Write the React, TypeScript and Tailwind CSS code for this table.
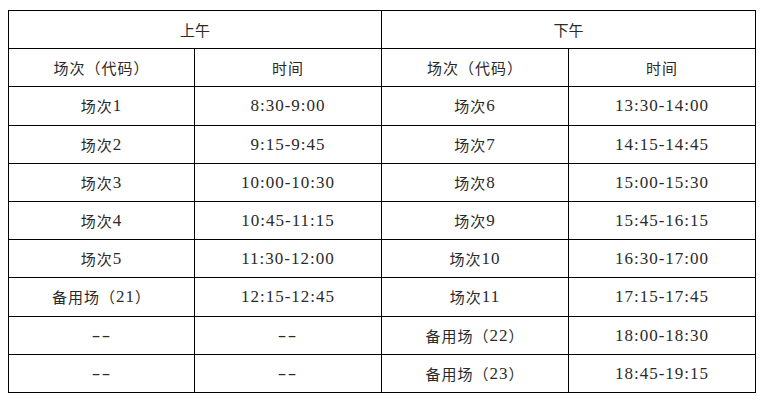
import type { ReactNode } from "react";

const am = [
  ["场次1", "8:30-9:00"],
  ["场次2", "9:15-9:45"],
  ["场次3", "10:00-10:30"],
  ["场次4", "10:45-11:15"],
  ["场次5", "11:30-12:00"],
  ["备用场（21）", "12:15-12:45"],
  ["--", "--"],
  ["--", "--"],
];
const pm = [
  ["场次6", "13:30-14:00"],
  ["场次7", "14:15-14:45"],
  ["场次8", "15:00-15:30"],
  ["场次9", "15:45-16:15"],
  ["场次10", "16:30-17:00"],
  ["场次11", "17:15-17:45"],
  ["备用场（22）", "18:00-18:30"],
  ["备用场（23）", "18:45-19:15"],
];

// ascii runs get a serif face, a bit larger, like the half-width glyphs of the original
function Txt({ s }: { s: string }) {
  if (s === "--") {
    return (
      <span
        className="inline-block text-[17px] tracking-[1px] scale-x-150"
        style={{ fontFamily: '"Liberation Serif", serif' }}
      >
        --
      </span>
    );
  }
  const parts = s.match(/[\x20-\x7e]+|[^\x20-\x7e]+/g) || [];
  const out: ReactNode[] = parts.map((p, i) =>
    /^[\x20-\x7e]+$/.test(p) ? (
      <span
        key={i}
        className="text-[17px] tracking-[1px]"
        style={{ fontFamily: '"Liberation Serif", serif' }}
      >
        {p}
      </span>
    ) : (
      <span key={i} className="tracking-[1px]">{p}</span>
    )
  );
  return <>{out}</>;
}

export default function App() {
  const cell =
    "h-[38.2px] flex items-center justify-center border-r border-b border-black leading-none";

  return (
    <main
      className="w-[764px] h-[401px] bg-white pt-[10px] pl-[8px] text-[15px] text-[#2a2a2a]"
      style={{ fontFamily: '"Noto Sans CJK SC", sans-serif' }}
    >
      <div className="grid grid-cols-[186px_187px_187px_187px] w-[748px] border-l border-t border-black">
        <div className={`${cell} col-span-2`}>上午</div>
        <div className={`${cell} col-span-2`}>下午</div>

        <div className={cell}><Txt s="场次（代码）" /></div>
        <div className={cell}><Txt s="时间" /></div>
        <div className={cell}><Txt s="场次（代码）" /></div>
        <div className={cell}><Txt s="时间" /></div>

        {am.map((r, i) => (
          <div key={i} className="contents">
            <div className={cell}><Txt s={r[0]} /></div>
            <div className={cell}><Txt s={r[1]} /></div>
            <div className={cell}><Txt s={pm[i][0]} /></div>
            <div className={cell}><Txt s={pm[i][1]} /></div>
          </div>
        ))}
      </div>
    </main>
  );
}
